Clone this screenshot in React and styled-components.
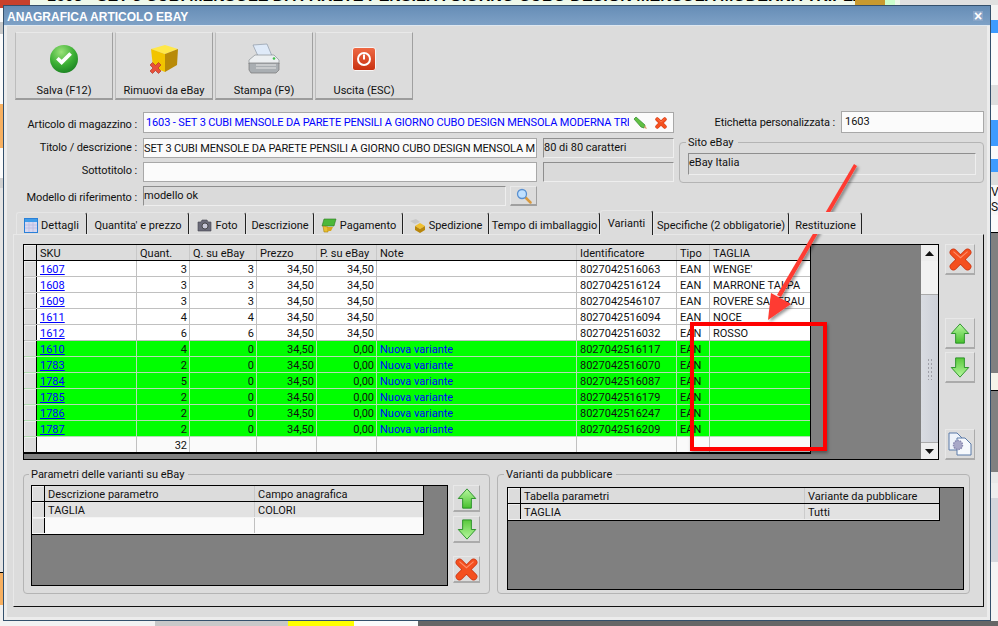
import React from "react";
import styled, { createGlobalStyle } from "styled-components";

const GlobalStyle = createGlobalStyle`
  html, body { margin: 0; padding: 0; background: #666; }
  body { font-family: Roboto, "Liberation Sans", sans-serif; font-size: 11px; color: #111; }
`;

/* ---------- desktop behind the window ---------- */
const Desktop = styled.div`
  position: relative;
  width: 998px;
  height: 626px;
  overflow: hidden;
  display: flex;
  flex-direction: column;
`;
const TopStrip = styled.div`
  height: 5px;
  flex: none;
  display: flex;
  overflow: hidden;
  background: #eef8ea;
`;
const Tomato = styled.div`
  width: 30px;
  flex: none;
  background: #c8402c;
  margin-right: 17px;
`;
const BehindTitle = styled.div`
  width: 808px;
  flex: none;
  margin-top: -13px;
  font-family: "Liberation Sans", sans-serif;
  font-weight: 700;
  font-size: 16px;
  line-height: 18px;
  white-space: nowrap;
  overflow: hidden;
  color: #000;
`;
const GoldTile = styled.div`
  width: 30px;
  flex: none;
  background: #c89a30;
`;
const GreenRest = styled.div`
  width: 10px;
  flex: none;
  background: #ccffcc;
`;
const GreyRest = styled.div`
  flex: 1;
  margin-left: 5px;
  background: #e0e0e0;
`;
const Middle = styled.div`
  flex: 1;
  display: flex;
  min-height: 0;
`;
const SideStrip = styled.div`
  flex: none;
  width: ${(p) => p.$w}px;
  display: flex;
  flex-direction: column;
  overflow: hidden;
`;
const Band = styled.div`
  height: ${(p) => p.$h}px;
  flex: none;
  background: ${(p) => p.$c};
  font-size: 12px;
  line-height: ${(p) => p.$h}px;
  white-space: nowrap;
  color: #111;
`;
const BottomStrip = styled.div`
  height: 5px;
  flex: none;
  display: flex;
  background: #666;
`;
const BottomCell = styled.div`
  width: ${(p) => p.$w}px;
  flex: none;
  background: ${(p) => p.$c};
`;

/* ---------- window ---------- */
const Window = styled.div`
  width: 988px;
  flex: none;
  box-sizing: border-box;
  border: 1px solid #34506c;
  display: flex;
  flex-direction: column;
  background: #dcdcdc;
`;
const TitleBar = styled.div`
  height: 19px;
  flex: none;
  box-sizing: content-box;
  display: flex;
  align-items: center;
  justify-content: space-between;
  padding: 0 7px 0 3px;
  background: linear-gradient(#668db6, #7ea1c6);
  border-bottom: 1px solid #dfe8f0;
  color: #fff;
  font-family: "Liberation Sans", sans-serif;
  font-weight: 700;
  font-size: 12px;
`;
const TitleText = styled.span`
  padding-top: 3px;
`;
const CloseBox = styled.div`
  width: 10px;
  height: 10px;
  background: #8aa6c8;
  color: #fff;
  font-size: 14px;
  font-weight: 700;
  line-height: 10px;
  text-align: center;
`;
const WindowBody = styled.div`
  flex: 1;
  position: relative;
  border: 3px solid #ececec;
  border-top: 0;
  padding: 6px 0 0 8px;
  display: flex;
  flex-direction: column;
`;

/* ---------- toolbar ---------- */
const Toolbar = styled.div`
  display: flex;
  gap: 2px;
`;
const ToolButton = styled.div`
  box-sizing: border-box;
  width: 98px;
  height: 68px;
  display: flex;
  flex-direction: column;
  align-items: center;
  padding-top: 10px;
  background: #dcdcdc;
  border: 1px solid #e9e9e9;
  border-right: 1px solid #a0a0a0;
  border-bottom: 2px solid #9c9c9c;
  border-left: 1px solid #bdbdbd;
`;
const IconSlot = styled.div`
  height: 32px;
  flex: none;
  display: flex;
  align-items: center;
  justify-content: center;
`;
const ToolLabel = styled.span`
  margin-top: 8px;
  font-size: 11px;
  line-height: 16px;
  white-space: nowrap;
`;

/* ---------- form ---------- */
const FormArea = styled.div`
  display: flex;
  margin-top: 11px;
`;
const LeftForm = styled.div`
  width: 659px;
  flex: none;
  display: flex;
  flex-direction: column;
  gap: 4px;
  padding-top: 1px;
`;
const FieldRow = styled.div`
  display: grid;
  grid-template-columns: ${(p) => p.$cols};
  column-gap: ${(p) => p.$gap}px;
  height: ${(p) => p.$h || 20}px;
  margin-bottom: ${(p) => p.$after || 0}px;
`;
const FieldLabel = styled.div`
  text-align: right;
  padding-right: ${(p) => p.$end || 0}px;
  transform: translateY(${(p) => p.$nudge || 0}px);
  font-size: 11px;
  letter-spacing: -0.1px;
  line-height: 20px;
  white-space: nowrap;
`;
const Field = styled.div`
  box-sizing: border-box;
  display: flex;
  align-items: center;
  overflow: hidden;
  padding-bottom: ${(p) => (p.$readOnly ? 2 : 0)}px;
  font-size: 11px;
  white-space: nowrap;
  background: ${(p) => (p.$readOnly ? "#dadada" : "#fbfbfb")};
  color: ${(p) => (p.$blue ? "#0000ff" : "#111")};
  border: 1px solid ${(p) => (p.$readOnly ? "#eeeeee" : "#a8a8a8")};
  border-top-color: ${(p) => (p.$readOnly ? "#8e8e8e" : "#a8a8a8")};
  border-left-color: ${(p) => (p.$readOnly ? "#8e8e8e" : "#a8a8a8")};
`;
const FieldText = styled.span`
  flex: 1;
  min-width: 0;
  overflow: hidden;
  letter-spacing: -0.14px;
  padding-left: ${(p) => p.$pad || 0}px;
`;
const FieldIcons = styled.span`
  flex: none;
  display: flex;
  align-items: center;
  gap: 7px;
  padding: 0 6px 0 4px;
`;
const SearchButton = styled.div`
  box-sizing: border-box;
  display: flex;
  align-items: center;
  justify-content: center;
  background: #dcdcdc;
  border: 1px solid #e9e9e9;
  border-right-color: #a0a0a0;
  border-bottom: 2px solid #a0a0a0;
`;
const RightForm = styled.div`
  width: 305px;
  flex: none;
  margin-left: 5px;
  display: flex;
  flex-direction: column;
`;
const TagRow = styled.div`
  display: flex;
  justify-content: flex-end;
  align-items: center;
  gap: 6px;
  height: 22px;
  margin-bottom: 2px;
`;
const TagField = styled(Field)`
  width: 143px;
  height: 22px;
  padding: 0 0 2px 3px;
`;
const GroupBox = styled.fieldset`
  box-sizing: border-box;
  width: ${(p) => p.$w}px;
  height: ${(p) => p.$h}px;
  margin: 0;
  padding: ${(p) => p.$pad};
  flex: none;
  border: 1px solid #b4b4b4;
  border-radius: 4px;
  display: flex;
`;
const GroupLegend = styled.legend`
  font-size: 11px;
  line-height: 13px;
  padding: 1px 4px 0 2px;
  margin-bottom: -1px;
  margin-left: ${(p) => p.$in || -2}px;
`;
const SiteField = styled(Field)`
  width: 288px;
  height: 22px;
  align-items: flex-start;
  padding-top: 2px;
`;

/* ---------- tabs ---------- */
const TabStrip = styled.div`
  display: flex;
  height: 22px;
  margin-top: 6px;
  padding-left: 1px;
  position: relative;
  z-index: 1;
`;
const Tab = styled.div`
  box-sizing: border-box;
  width: ${(p) => p.$w}px;
  flex: none;
  display: flex;
  align-items: center;
  justify-content: center;
  gap: 3px;
  white-space: nowrap;
  font-size: 11px;
  border-top: 1px solid #e6e6e6;
  border-left: 1px solid #e6e6e6;
  border-right: 1px solid #222;
  border-radius: 3px 3px 0 0;
  padding-top: ${(p) => (p.$active ? 0 : 3)}px;
  margin-top: ${(p) => (p.$active ? -2 : 0)}px;
  height: ${(p) => (p.$active ? 25 : 22)}px;
  background: #dcdcdc;
`;
const TabPanel = styled.div`
  box-sizing: border-box;
  width: 971px;
  height: 373px;
  margin-left: -2px;
  padding: 9px 0 0 9px;
  border: 1px solid #e8e8e8;
  border-right: 1px solid #111;
  border-bottom: 1px solid #111;
  display: flex;
  flex-direction: column;
`;
const TopRow = styled.div`
  display: flex;
  gap: 6px;
`;

/* ---------- data grids ---------- */
const GridFrame = styled.div`
  box-sizing: border-box;
  width: ${(p) => p.$w}px;
  height: ${(p) => p.$h}px;
  flex: none;
  border: 1px solid #000;
  background: #808080;
  display: flex;
  justify-content: space-between;
`;
const GridTable = styled.div`
  width: ${(p) => p.$w}px;
  flex: none;
  align-self: flex-start;
  border-right: 1px solid #000;
  border-bottom: 1px solid #000;
  box-sizing: content-box;
`;
const GridRow = styled.div`
  display: grid;
  grid-template-columns: ${(p) => p.$cols};
  height: 16px;
  box-sizing: border-box;
  background: ${(p) => p.$bg};
  border-bottom: 1px solid ${(p) => p.$line || "#c0c0c0"};
`;
const Cell = styled.div`
  box-sizing: border-box;
  min-width: 0;
  padding: 1px 2px 0 3px;
  font-size: 11px;
  line-height: 15px;
  white-space: nowrap;
  overflow: hidden;
  text-align: ${(p) => (p.$right ? "right" : "left")};
  border-right: 1px solid ${(p) => p.$line || "#c0c0c0"};
  color: ${(p) => p.$color || "#111"};
  &:last-child { border-right: 0; }
`;
const RowHead = styled.div`
  background: #dcdcdc;
  border-right: 1px solid #000;
  box-shadow: inset 1px 1px 0 #eee;
`;
const SkuLink = styled.a`
  color: #0000ff;
  text-decoration: underline;
`;

/* ---------- scrollbar ---------- */
const ScrollBar = styled.div`
  width: 17px;
  flex: none;
  display: flex;
  flex-direction: column;
  background: #f0f0f0;
`;
const ScrollArrow = styled.div`
  height: 16px;
  flex: none;
  display: flex;
  align-items: center;
  justify-content: center;
  background: #eeeeee;
`;
const ScrollGap = styled.div`
  height: 33px;
  flex: none;
  background: #f2f2f2;
`;
const ScrollThumb = styled.div`
  flex: 1;
  display: flex;
  align-items: center;
  justify-content: center;
  background: linear-gradient(90deg, #d9dce2, #cdd0d8);
  border-top: 1px solid #aaa;
  border-bottom: 1px solid #aaa;
`;
const Grip = styled.div`
  width: 6px;
  height: 22px;
  background-image: radial-gradient(#a0a0a8 1px, transparent 1px);
  background-size: 3px 4px;
`;

/* ---------- side buttons ---------- */
const SideColumn = styled.div`
  display: flex;
  flex-direction: column;
  flex: none;
`;
const SideButton = styled.div`
  box-sizing: border-box;
  width: ${(p) => p.$w}px;
  height: ${(p) => p.$h}px;
  margin-top: ${(p) => p.$top || 0}px;
  flex: none;
  display: flex;
  align-items: center;
  justify-content: center;
  background: #dcdcdc;
  border: 1px solid #e8e8e8;
  border-right-color: #ababab;
  border-bottom: 2px solid #ababab;
`;

const BottomRow = styled.div`
  display: flex;
  gap: 7px;
  margin-top: 7px;
`;
const ParamsInner = styled.div`
  display: flex;
  gap: 5px;
  margin-top: ${(p) => p.$top}px;
`;

/* ---------- red annotation on top of the screenshot ---------- */
const Annotation = styled.svg`
  position: absolute;
  left: 0;
  top: 0;
  pointer-events: none;
`;
const Highlight = styled.div`
  position: absolute;
  left: 690px;
  top: 322px;
  width: 137px;
  height: 129px;
  box-sizing: border-box;
  border: 4px solid #ff0000;
  box-shadow: 1px 2px 3px rgba(0, 0, 0, 0.35);
`;

/* ---------- icons ---------- */
const CheckIcon = () => (
  <svg width="28" height="28" viewBox="0 0 30 30">
    <defs>
      <radialGradient id="chk" cx="40%" cy="25%" r="85%">
        <stop offset="0" stopColor="#9be27a" />
        <stop offset="0.55" stopColor="#3aae33" />
        <stop offset="1" stopColor="#16791f" />
      </radialGradient>
    </defs>
    <circle cx="15" cy="15" r="15" fill="url(#chk)" />
    <path d="M6.500 15.500l6 6 11-11-2.800-2.600-8.200 8-3.200-3.100z" fill="#fff" />
  </svg>
);
const BoxIcon = () => (
  <svg width="30" height="30" viewBox="0 0 30 30">
    <path d="M2 5l14-4 13 4-13 5z" fill="#ffe84a" />
    <path d="M2 5l14 5v18L4 23z" fill="#f2c400" />
    <path d="M16 10l13-5-1 16-12 7z" fill="#b88a08" />
    <path d="M1 21l2.500-2.500 3 3 3-3L12 21l-3 3 3 3-2.500 2.500-3-3-3 3L1 27l3-3z" fill="#e8503a" stroke="#a82a1c" strokeWidth=".6" />
  </svg>
);
const PrinterIcon = () => (
  <svg width="32" height="32" viewBox="0 0 32 32">
    <path d="M5 2l14-1 5 12H10z" fill="#dfeaf8" stroke="#8e9aa8" strokeWidth=".7" />
    <path d="M1 17l6-5h19l5 5v4H1z" fill="#eceff1" stroke="#8a8f94" strokeWidth=".7" />
    <path d="M1 20h30v7l-3 3H3l-2-3z" fill="#a9aeb2" stroke="#777" strokeWidth=".7" />
    <path d="M8 22h20M8 25h20" stroke="#e8e8e8" strokeWidth="1" />
    <circle cx="26" cy="15.500" r="1.300" fill="#3fc04a" />
  </svg>
);
const PowerIcon = () => (
  <svg width="24" height="24" viewBox="0 0 24 24">
    <defs>
      <linearGradient id="pwr" x1="0" y1="0" x2="0" y2="1">
        <stop offset="0" stopColor="#ef6a45" />
        <stop offset="1" stopColor="#c8300f" />
      </linearGradient>
    </defs>
    <rect x=".5" y=".5" width="23" height="23" rx="2.500" fill="url(#pwr)" stroke="#f6f6f6" />
    <circle cx="12" cy="12" r="6" fill="none" stroke="#fff" strokeWidth="2" />
    <rect x="11" y="7.500" width="2" height="5" fill="#fff" />
  </svg>
);
const RedX = ({ size = 23 }) => (
  <svg width={size} height={size} viewBox="0 0 26 26">
    <path d="M5 5l16 16M21 5L5 21" stroke="#c93412" strokeWidth="8.500" strokeLinecap="round" />
    <path d="M5 5l16 16M21 5L5 21" stroke="#f4501f" strokeWidth="7" strokeLinecap="round" />
    <path d="M5 4l8 7 8-7" fill="none" stroke="#ff8f6c" strokeWidth="1.200" />
  </svg>
);
const ArrowIcon = ({ down }) => (
  <svg width="20" height="21" viewBox="0 0 22 24">
    <defs>
      <linearGradient id={down ? "ard" : "aru"} x1="0" y1="0" x2="0" y2="1">
        <stop offset="0" stopColor={down ? "#58c83a" : "#b8f8a0"} />
        <stop offset="1" stopColor={down ? "#b8f8a0" : "#48c02e"} />
      </linearGradient>
    </defs>
    <path
      d={down ? "M6 1h10v11h5L11 23 1 12h5z" : "M6 23h10V12h5L11 1 1 12h5z"}
      fill={`url(#${down ? "ard" : "aru"})`}
      stroke="#1f8a1f"
      strokeWidth="1"
    />
  </svg>
);
const DocGearIcon = () => (
  <svg width="24" height="24" viewBox="0 0 24 24">
    <path d="M1 1h8l5 5v12H1z" fill="#eef3fa" stroke="#5a7aa8" />
    <path d="M9 6h8l6 6v11H9z" fill="#f6f9fd" stroke="#5a7aa8" />
    <circle cx="10" cy="13" r="4.500" fill="#a8a8c8" stroke="#8888b0" strokeDasharray="1.500 1" strokeWidth="1.500" />
  </svg>
);
const PencilIcon = () => (
  <svg width="15" height="14" viewBox="0 0 15 14">
    <path d="M1 3l2-2 9 8-1 3-3-1z" fill="#62c043" stroke="#2b8a2b" strokeWidth=".7" />
    <path d="M8 11l3 1 1-3 2 4z" fill="#d8a070" />
  </svg>
);
const MagnifierIcon = () => (
  <svg width="16" height="16" viewBox="0 0 16 16">
    <path d="M9 9l5.500 5.500" stroke="#d89a40" strokeWidth="2.500" strokeLinecap="round" />
    <circle cx="6" cy="6" r="4.500" fill="#bfe0ff" stroke="#5a90d0" strokeWidth="1.300" />
  </svg>
);
const CalendarIcon = () => (
  <svg width="14" height="15" viewBox="0 0 14 15">
    <rect x=".5" y=".5" width="13" height="14" fill="#d8d8f0" stroke="#2a80d8" />
    <rect x="1" y="1" width="12" height="3" fill="#3f9ce8" />
    <path d="M1 7h12M1 10h12M5 4v10M9 4v10" stroke="#b8b8e0" strokeWidth=".7" />
  </svg>
);
const CameraIcon = () => (
  <svg width="15" height="13" viewBox="0 0 15 13">
    <path d="M1 3h3l1-2h5l1 2h3v9H1z" fill="#6a6a78" stroke="#44444e" strokeWidth=".6" />
    <circle cx="8" cy="7" r="3" fill="#c8c8d8" stroke="#333" strokeWidth=".8" />
  </svg>
);
const PaymentIcon = () => (
  <svg width="16" height="16" viewBox="0 0 16 16">
    <path d="M3 2h12l-2 7H1z" fill="#4cb83a" stroke="#2a7a20" strokeWidth=".6" />
    <path d="M2 9l5 1v5H3z" fill="#e8c030" stroke="#a88010" strokeWidth=".6" />
    <path d="M7 10h5l-2 4H7z" fill="#d8a820" />
  </svg>
);
const ShippingIcon = () => (
  <svg width="16" height="15" viewBox="0 0 16 15">
    <path d="M0 3l6-2 4 3-5 2z" fill="#c8c8c8" />
    <path d="M5 8l5-3 5 3-5 3z" fill="#f0c030" />
    <path d="M5 8l5 3v4l-5-3zM10 11l5-3v4l-5 3z" fill="#b8860b" />
  </svg>
);
const UpTri = () => (
  <svg width="9" height="5" viewBox="0 0 9 5"><path d="M4.500 0L9 5H0z" fill="#111" /></svg>
);
const DownTri = () => (
  <svg width="9" height="5" viewBox="0 0 9 5"><path d="M0 0h9L4.500 5z" fill="#111" /></svg>
);

/* ---------- data ---------- */
const mainCols = "13px 100px 53px 67px 60px 60px 200px 100px 33px 100px";
const paramCols = "13px 210px 168px";
const publishCols = "13px 284px 134px";

const headers = ["SKU", "Quant.", "Q. su eBay", "Prezzo", "P. su eBay", "Note", "Identificatore", "Tipo", "TAGLIA"];
const published = [
  ["1607", 3, 3, "34,50", "8027042516063", "WENGE'"],
  ["1608", 3, 3, "34,50", "8027042516124", "MARRONE TALPA"],
  ["1609", 3, 3, "34,50", "8027042546107", "ROVERE SAGERAU"],
  ["1611", 4, 4, "34,50", "8027042516094", "NOCE"],
  ["1612", 6, 6, "34,50", "8027042516032", "ROSSO"],
];
const added = [
  ["1610", 4, "8027042516117"],
  ["1783", 2, "8027042516070"],
  ["1784", 5, "8027042516087"],
  ["1785", 2, "8027042516179"],
  ["1786", 2, "8027042516247"],
  ["1787", 2, "8027042516209"],
];
const tabs = [
  { w: 71, label: "Dettagli", icon: <CalendarIcon /> },
  { w: 102, label: "Quantita' e prezzo" },
  { w: 57, label: "Foto", icon: <CameraIcon /> },
  { w: 68, label: "Descrizione" },
  { w: 89, label: "Pagamento", icon: <PaymentIcon /> },
  { w: 86, label: "Spedizione", icon: <ShippingIcon /> },
  { w: 111, label: "Tempo di imballaggio" },
  { w: 53, label: "Varianti", active: true },
  { w: 136, label: "Specifiche (2 obbligatorie)" },
  { w: 73, label: "Restituzione" },
];
const rightBands = [
  [15, "#f4f4f4"], [13, "#3d9bff"], [52, "#fbfbfb"], [20, "#dedede"], [15, "#fbfbfb"], [26, "#3d9bff"],
  [13, "#fbfbfb"], [13, "#3d9bff"], [13, "#dcdcdc"], [14, "#f8f8f8", "Ve"], [16, "#f8f8f8", "S"],
  [17, "#fbfbfb"], [1, "#000"], [140, "#808080"], [17, "#f6f4ea"], [1, "#000"], [81, "#808080"],
  [11, "#e8e8e8"], [15, "#eeeeee"], [64, "#d4d6dc"], [62, "#f4f4f4"],
];
const leftBands = [
  [3, "#c8402c"], [14, "#fbfbfb"], [12, "#c8c8c8"], [70, "#fbfbfb"], [44, "#f8b060"], [30, "#fbfbfb"],
  [10, "#d0d0d0"], [384, "#e4e4e4"], [1, "#000"], [32, "#f8b060"], [16, "#f0f0f0"],
];

export default function App() {
  return (
    <Desktop>
      <GlobalStyle />
      <TopStrip>
        <Tomato />
        <BehindTitle>1603 - SET 3 CUBI MENSOLE DA PARETE PENSILI A GIORNO CUBO DESIGN MENSOLA MODERNA TRIPLA</BehindTitle>
        <GoldTile />
        <GreenRest />
        <GreyRest />
      </TopStrip>
      <Middle>
        <SideStrip $w={3}>
          {leftBands.map(([h, c], i) => <Band key={i} $h={h} $c={c} />)}
        </SideStrip>
        <Window>
          <TitleBar>
            <TitleText>ANAGRAFICA ARTICOLO EBAY</TitleText>
            <CloseBox>×</CloseBox>
          </TitleBar>
          <WindowBody>
            <Toolbar>
              <ToolButton><IconSlot><CheckIcon /></IconSlot><ToolLabel>Salva (F12)</ToolLabel></ToolButton>
              <ToolButton><IconSlot><BoxIcon /></IconSlot><ToolLabel>Rimuovi da eBay</ToolLabel></ToolButton>
              <ToolButton><IconSlot><PrinterIcon /></IconSlot><ToolLabel>Stampa (F9)</ToolLabel></ToolButton>
              <ToolButton><IconSlot><PowerIcon /></IconSlot><ToolLabel>Uscita (ESC)</ToolLabel></ToolButton>
            </Toolbar>

            <FormArea>
              <LeftForm>
                <FieldRow $cols="122px 531px" $gap={6} $h={21} $after={1}>
                  <FieldLabel $nudge={3}>Articolo di magazzino :</FieldLabel>
                  <Field $blue>
                    <FieldText $pad={2}>1603 - SET 3 CUBI MENSOLE DA PARETE PENSILI A GIORNO CUBO DESIGN MENSOLA MODERNA TRI</FieldText>
                    <FieldIcons><PencilIcon /><RedX size={12} /></FieldIcons>
                  </Field>
                </FieldRow>
                <FieldRow $cols="122px 394px 131px" $gap={6}>
                  <FieldLabel>Titolo / descrizione :</FieldLabel>
                  <Field><FieldText>SET 3 CUBI MENSOLE DA PARETE PENSILI A GIORNO CUBO DESIGN MENSOLA M</FieldText></Field>
                  <Field $readOnly>80 di 80 caratteri</Field>
                </FieldRow>
                <FieldRow $cols="122px 394px 131px" $gap={6}>
                  <FieldLabel $nudge={-1}>Sottotitolo :</FieldLabel>
                  <Field />
                  <Field $readOnly />
                </FieldRow>
                <FieldRow $cols="124px 363px 27px" $gap={4}>
                  <FieldLabel $end={2} $nudge={2}>Modello di riferimento :</FieldLabel>
                  <Field $readOnly>modello ok</Field>
                  <SearchButton><MagnifierIcon /></SearchButton>
                </FieldRow>
              </LeftForm>
              <RightForm>
                <TagRow>
                  <FieldLabel $nudge={1}>Etichetta personalizzata :</FieldLabel>
                  <TagField>1603</TagField>
                </TagRow>
                <GroupBox $w={305} $h={48} $pad="5px 0 0 8px">
                  <GroupLegend>Sito eBay</GroupLegend>
                  <SiteField $readOnly>eBay Italia</SiteField>
                </GroupBox>
              </RightForm>
            </FormArea>

            <TabStrip>
              {tabs.map((t) => (
                <Tab key={t.label} $w={t.w} $active={t.active}>
                  {t.icon}
                  {t.label}
                </Tab>
              ))}
            </TabStrip>
            <TabPanel>
              <TopRow>
                <GridFrame $w={916} $h={216}>
                  <GridTable $w={786}>
                    <GridRow $cols={mainCols} $bg="#dcdcdc" $line="#000">
                      <RowHead />
                      {headers.map((h) => <Cell key={h} $line="#c8c8c8">{h}</Cell>)}
                    </GridRow>
                    {published.map(([sku, q, qe, price, ean, size]) => (
                      <GridRow key={sku} $cols={mainCols} $bg="#fff">
                        <RowHead />
                        <Cell><SkuLink>{sku}</SkuLink></Cell>
                        <Cell $right>{q}</Cell>
                        <Cell $right>{qe}</Cell>
                        <Cell $right>{price}</Cell>
                        <Cell $right>{price}</Cell>
                        <Cell />
                        <Cell>{ean}</Cell>
                        <Cell>EAN</Cell>
                        <Cell>{size}</Cell>
                      </GridRow>
                    ))}
                    {added.map(([sku, q, ean]) => (
                      <GridRow key={sku} $cols={mainCols} $bg="#00ff00" $line="#b4dcb4">
                        <RowHead />
                        <Cell $line="#b4dcb4"><SkuLink>{sku}</SkuLink></Cell>
                        <Cell $right $line="#b4dcb4">{q}</Cell>
                        <Cell $right $line="#b4dcb4">0</Cell>
                        <Cell $right $line="#b4dcb4">34,50</Cell>
                        <Cell $right $line="#b4dcb4">0,00</Cell>
                        <Cell $line="#b4dcb4" $color="#0000ff">Nuova variante</Cell>
                        <Cell $line="#b4dcb4">{ean}</Cell>
                        <Cell $line="#b4dcb4">EAN</Cell>
                        <Cell $line="#b4dcb4" />
                      </GridRow>
                    ))}
                    <GridRow $cols={mainCols} $bg="#fafafa" $line="#000">
                      <RowHead />
                      <Cell />
                      <Cell $right>32</Cell>
                      <Cell />
                      <Cell />
                      <Cell />
                      <Cell />
                      <Cell />
                      <Cell />
                      <Cell />
                    </GridRow>
                  </GridTable>
                  <ScrollBar>
                    <ScrollArrow><UpTri /></ScrollArrow>
                    <ScrollGap />
                    <ScrollThumb><Grip /></ScrollThumb>
                    <ScrollArrow><DownTri /></ScrollArrow>
                  </ScrollBar>
                </GridFrame>
                <SideColumn>
                  <SideButton $w={30} $h={31}><RedX /></SideButton>
                  <SideButton $w={30} $h={31} $top={43}><ArrowIcon /></SideButton>
                  <SideButton $w={30} $h={31} $top={3}><ArrowIcon down /></SideButton>
                  <SideButton $w={30} $h={31} $top={46}><DocGearIcon /></SideButton>
                </SideColumn>
              </TopRow>

              <BottomRow>
                <GroupBox $w={467} $h={127} $pad="0 0 0 7px">
                  <GroupLegend>Parametri delle varianti su eBay</GroupLegend>
                  <ParamsInner $top={5}>
                    <GridFrame $w={417} $h={101}>
                      <GridTable $w={391}>
                        <GridRow $cols={paramCols} $bg="#dcdcdc" $line="#000">
                          <RowHead />
                          <Cell $line="#c8c8c8">Descrizione parametro</Cell>
                          <Cell>Campo anagrafica</Cell>
                        </GridRow>
                        <GridRow $cols={paramCols} $bg="#e2e2e2" $line="#f4f4f4">
                          <RowHead />
                          <Cell $line="#cccccc">TAGLIA</Cell>
                          <Cell>COLORI</Cell>
                        </GridRow>
                        <GridRow $cols={paramCols} $bg="#fafafa" $line="#fafafa">
                          <RowHead />
                          <Cell />
                          <Cell />
                        </GridRow>
                      </GridTable>
                    </GridFrame>
                    <SideColumn>
                      <SideButton $w={27} $h={27}><ArrowIcon /></SideButton>
                      <SideButton $w={27} $h={27} $top={4}><ArrowIcon down /></SideButton>
                      <SideButton $w={27} $h={27} $top={13}><RedX /></SideButton>
                    </SideColumn>
                  </ParamsInner>
                </GroupBox>
                <GroupBox $w={473} $h={127} $pad="0 0 0 9px">
                  <GroupLegend $in={-3}>Varianti da pubblicare</GroupLegend>
                  <ParamsInner $top={7}>
                    <GridFrame $w={457} $h={103}>
                      <GridTable $w={431}>
                        <GridRow $cols={publishCols} $bg="#dcdcdc" $line="#000">
                          <RowHead />
                          <Cell $line="#c8c8c8">Tabella parametri</Cell>
                          <Cell>Variante da pubblicare</Cell>
                        </GridRow>
                        <GridRow $cols={publishCols} $bg="#e2e2e2" $line="#f0f0f0">
                          <RowHead />
                          <Cell $line="#cccccc">TAGLIA</Cell>
                          <Cell>Tutti</Cell>
                        </GridRow>
                      </GridTable>
                    </GridFrame>
                  </ParamsInner>
                </GroupBox>
              </BottomRow>
            </TabPanel>
          </WindowBody>
        </Window>
        <SideStrip $w={7}>
          {rightBands.map(([h, c, t], i) => <Band key={i} $h={h} $c={c}>{t}</Band>)}
        </SideStrip>
      </Middle>
      <BottomStrip>
        <BottomCell $w={155} $c="#f2f2f2" />
        <BottomCell $w={133} $c="#c8c8c8" />
        <BottomCell $w={66} $c="#ffff00" />
        <BottomCell $w={64} $c="#fbfbfb" />
      </BottomStrip>

      <Highlight />
      <Annotation width="998" height="626" viewBox="0 0 998 626">
        <defs>
          <filter id="arrowShadow" x="-20%" y="-20%" width="140%" height="140%">
            <feDropShadow dx="2" dy="2" stdDeviation="1.500" floodColor="#000" floodOpacity=".4" />
          </filter>
        </defs>
        <g filter="url(#arrowShadow)" fill="#ff3b30" stroke="none">
          <path d="M854 164l3 2-76 131-4-2z" />
          <path d="M768 320l3-27 20 11z" />
        </g>
      </Annotation>
    </Desktop>
  );
}
